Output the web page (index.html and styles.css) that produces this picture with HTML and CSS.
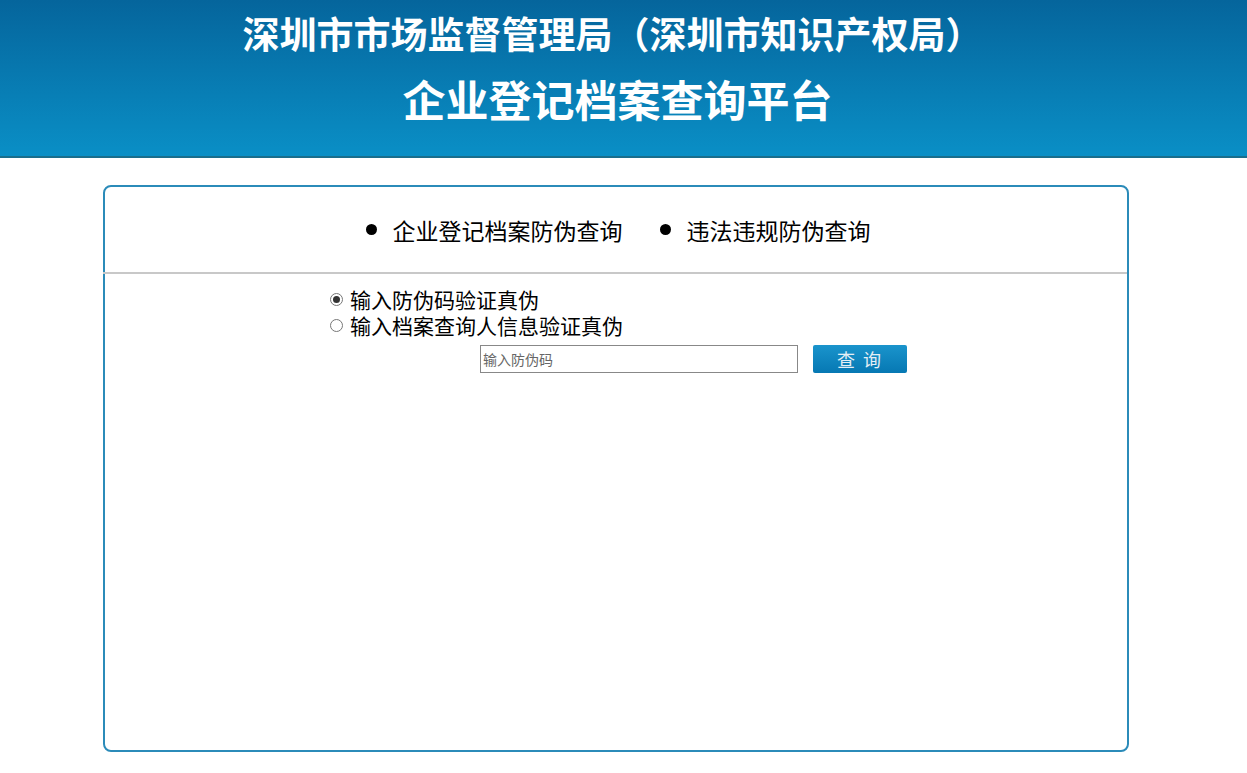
FILE: index.html
```html
<!DOCTYPE html>
<html lang="zh-CN">
<head>
  <meta charset="UTF-8">
  <title>企业登记档案查询平台</title>
  <link rel="stylesheet" href="styles.css">
</head>
<body>

<div class="header">
  <h1>深圳市市场监督管理局（深圳市知识产权局）</h1>
  <h2>企业登记档案查询平台</h2>
</div>

<div class="panel">
  <div class="tabs">
    <a class="tab" href="#"><span class="dot"></span>企业登记档案防伪查询</a>
    <a class="tab" href="#"><span class="dot"></span>违法违规防伪查询</a>
  </div>

  <div class="query">
    <label class="opt"><input type="radio" name="mode" checked>输入防伪码验证真伪</label>
    <label class="opt"><input type="radio" name="mode">输入档案查询人信息验证真伪</label>
    <div class="search-row">
      <input type="text" class="code-input" placeholder="输入防伪码">
      <button class="btn-query">查 询</button>
    </div>
  </div>
</div>

</body>
</html>
```

FILE: styles.css
```css
body {
  margin: 0;
  background: #fff;
  color: #000;
  font-family: "Microsoft YaHei", "Noto Sans CJK SC", "Noto Sans", sans-serif;
}
.header {
  height: 156px;
  background: linear-gradient(to bottom, #05659c 0%, #0a8fc6 100%);
  border-bottom: 2px solid #1a6e8c;
  color: #fff;
  text-align: center;
}
.header h1 {
  margin: 0;
  padding-top: 11px;
  padding-left: 6px;
  font-size: 37px;
  line-height: 44px;
  font-weight: 700;
  padding-right: 28px;
}
.header h2 {
  margin: 18px 0 0;
  font-size: 43px;
  line-height: 50px;
  font-weight: 700;
  padding-right: 12px;
}
.panel {
  width: 1022px;
  height: 563px;
  margin: 27px 0 0 103px;
  border: 2px solid #2b8bb9;
  border-radius: 8px;
}
.tabs {
  height: 85px;
  border-bottom: 2px solid #c8c8c8;
  margin-left: -2px;
  display: flex;
  justify-content: center;
  align-items: center;
  gap: 37px;
  padding-left: 6px;
}
.tab {
  display: flex;
  align-items: center;
  color: #000;
  text-decoration: none;
  font-size: 23px;
}
.dot {
  width: 11px;
  height: 11px;
  border-radius: 50%;
  background: #000;
  margin-right: 16px;
}
.query {
  padding: 12px 0 0 224px;
}
.opt {
  display: flex;
  align-items: center;
  font-size: 21px;
  line-height: 26px;
}
.opt input {
  appearance: none;
  width: 13px;
  height: 13px;
  margin: 0 7px 0 1px;
  border: 1px solid #777;
  border-radius: 50%;
  background: #fff;
  position: relative;
}
.opt input:checked::after {
  content: "";
  position: absolute;
  left: 2px;
  top: 2px;
  width: 7px;
  height: 7px;
  border-radius: 50%;
  background: #333;
}
.search-row {
  display: flex;
  gap: 15px;
  margin: 7px 0 0 151px;
}
.code-input {
  width: 318px;
  height: 28px;
  box-sizing: border-box;
  border: 1px solid #888;
  padding: 0 2px;
  font-size: 14px;
  font-family: inherit;
}
.code-input::placeholder {
  color: #666;
}
.btn-query {
  width: 94px;
  height: 28px;
  border: none;
  border-radius: 2px;
  background: linear-gradient(to bottom, #1a94cc 0%, #0678b3 100%);
  color: #e4eef5;
  font-size: 18px;
  font-family: inherit;
  letter-spacing: 2px;
  cursor: pointer;
}
```
